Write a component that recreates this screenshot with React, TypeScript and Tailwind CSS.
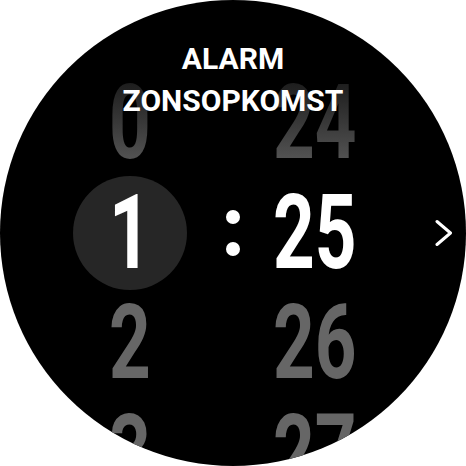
const ROWS = [
  { hour: "0", minute: "24", pos: "top" },
  { hour: "1", minute: "25", pos: "active" },
  { hour: "2", minute: "26", pos: "below" },
  { hour: "3", minute: "27", pos: "below" },
];

function Digits({ value, pos }: { value: string; pos: string }) {
  const tone =
    pos === "active"
      ? "text-white"
      : pos === "top"
        ? "bg-gradient-to-b from-[#161616] to-[#5f5f5f] bg-clip-text text-transparent"
        : "text-[#666666]";
  return (
    <span className={`inline-block scale-x-[0.7] text-[104px] font-bold leading-none ${tone}`}>
      {value}
    </span>
  );
}

export default function App() {
  return (
    <div className="w-[466px] h-[466px] bg-white font-['Roboto',sans-serif]">
      <div className="relative w-[466px] h-[466px] rounded-full bg-black overflow-hidden">
        {/* Title */}
        <div className="absolute inset-x-0 top-[38px] z-10 flex flex-col items-center text-[30px] leading-[42px] font-bold text-white">
          <span>ALARM</span>
          <span>ZONSOPKOMST</span>
        </div>

        {/* Time picker */}
        <div className="flex flex-col pt-[68px] pl-[73px]">
          {ROWS.map((row) => (
            <div key={row.hour} className="flex items-center h-[110px] shrink-0">
              <div className="w-[114px] h-[110px] flex items-center justify-center">
                {row.pos === "active" ? (
                  <div className="w-[114px] h-[114px] shrink-0 rounded-full bg-[#262626] flex items-center justify-center">
                    <Digits value={row.hour} pos={row.pos} />
                  </div>
                ) : (
                  <Digits value={row.hour} pos={row.pos} />
                )}
              </div>
              <div className="ml-[39px] w-[14px] flex flex-col gap-[18px]">
                {row.pos === "active" && (
                  <>
                    <span className="w-[14px] h-[14px] rounded-full bg-white" />
                    <span className="w-[14px] h-[14px] rounded-full bg-white" />
                  </>
                )}
              </div>
              <div className="ml-[18px] w-[114px] h-[110px] flex items-center justify-center">
                <Digits value={row.minute} pos={row.pos} />
              </div>
              <div className="ml-[63px] w-[18px]">
                {row.pos === "active" && (
                  <svg width="18" height="28" viewBox="0 0 18 28" fill="none">
                    <polyline
                      points="2,2.5 15.5,14 2,25.5"
                      stroke="white"
                      strokeWidth="3"
                      strokeLinecap="round"
                      strokeLinejoin="round"
                    />
                  </svg>
                )}
              </div>
            </div>
          ))}
        </div>
      </div>
    </div>
  );
}
